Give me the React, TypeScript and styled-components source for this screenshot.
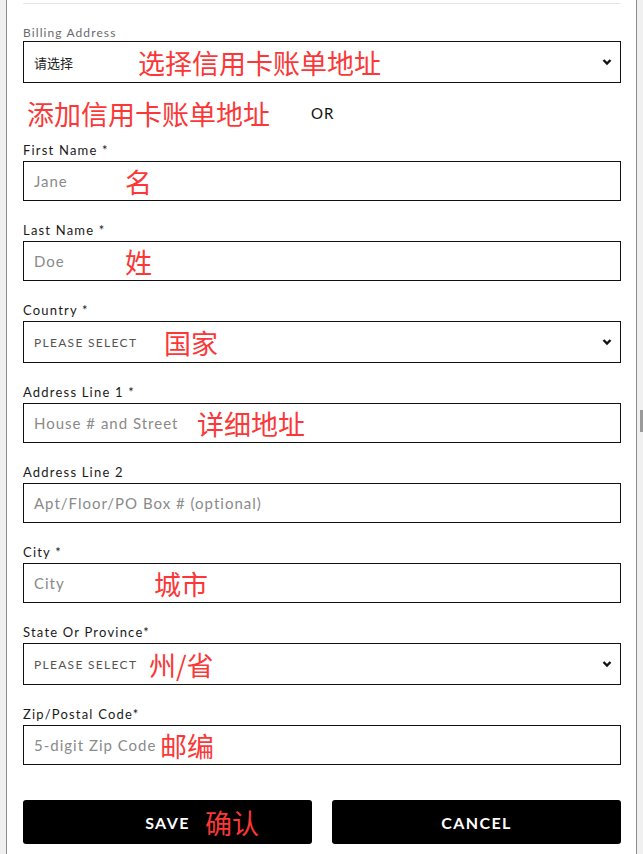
import React from 'react'
import styled, { createGlobalStyle } from 'styled-components'

const GlobalStyle = createGlobalStyle`
  html, body {
    margin: 0;
    padding: 0;
    background: #f0f0f0;
  }
  body {
    font-family: Lato, "Noto Sans", "Noto Sans CJK SC", sans-serif;
  }
`

type FieldType = {
    label: string
    placeholder: string
    note?: string
    noteX?: number
    select?: boolean
    first?: boolean
}

const fields: FieldType[] = [
    { label: 'First Name *', placeholder: 'Jane', note: '名', noteX: 101, first: true },
    { label: 'Last Name *', placeholder: 'Doe', note: '姓', noteX: 101 },
    { label: 'Country *', placeholder: 'PLEASE SELECT', note: '国家', noteX: 140, select: true },
    { label: 'Address Line 1 *', placeholder: 'House # and Street', note: '详细地址', noteX: 173 },
    { label: 'Address Line 2', placeholder: 'Apt/Floor/PO Box # (optional)' },
    { label: 'City *', placeholder: 'City', note: '城市', noteX: 130 },
    { label: 'State Or Province*', placeholder: 'PLEASE SELECT', note: '州/省', noteX: 125, select: true },
    { label: 'Zip/Postal Code*', placeholder: '5-digit Zip Code', note: '邮编', noteX: 136 },
]

function Chevron() {
    return (
        <ChevronIcon width="10" height="8" viewBox="0 0 10 8">
            <path d="M1.5 2 L5 5.5 L8.5 2" fill="none" stroke="#111" strokeWidth="2.4" />
        </ChevronIcon>
    )
}

function Field(props: FieldType) {
    return (
        <FieldStyle $first={props.first}>
            <Label>{props.label}</Label>
            <Box $select={props.select}>
                <Placeholder $select={props.select}>{props.placeholder}</Placeholder>
                {props.note && <Note style={{ left: props.noteX }}>{props.note}</Note>}
                {props.select && <Chevron />}
            </Box>
        </FieldStyle>
    )
}

export default function App() {
    return (
        <>
            <GlobalStyle />
            <Panel>
                <TopLine />
                <BillingLabel>Billing Address</BillingLabel>
                <Box $select>
                    <Chosen>请选择</Chosen>
                    <Note style={{ left: 114 }}>选择信用卡账单地址</Note>
                    <Chevron />
                </Box>
                <OrRow>
                    <AddNote>添加信用卡账单地址</AddNote>
                    <Or>OR</Or>
                </OrRow>
                {fields.map(f => <Field key={f.label} {...f} />)}
                <Buttons>
                    <Button>
                        SAVE
                        <Note style={{ left: 182 }}>确认</Note>
                    </Button>
                    <Button>CANCEL</Button>
                </Buttons>
            </Panel>
            <Thumb />
        </>
    )
}

const Panel = styled.div`
  margin-left: 6px;
  width: 631px;
  min-height: 854px;
  box-sizing: border-box;
  background: #fff;
  border-left: 1px solid #8c8c8c;
  border-right: 1px solid #8c8c8c;
  padding: 3px 15px 0 16px;
`
const TopLine = styled.div`
  height: 1px;
  background: #e6e6e6;
`
const BillingLabel = styled.div`
  margin-top: 21px;
  height: 16px;
  line-height: 16px;
  font-size: 12px;
  color: #6a6a6a;
  letter-spacing: 1.1px;
`
const Box = styled.div<{ $select?: boolean }>`
  position: relative;
  height: ${p => (p.$select ? 42 : 40)}px;
  box-sizing: border-box;
  border: 1.5px solid #111;
  display: flex;
  align-items: center;
  padding: 0 10px;
`
const Chosen = styled.span`
  font-size: 13px;
  color: #222;
  font-family: "Noto Sans CJK SC", sans-serif;
`
const Placeholder = styled.span<{ $select?: boolean }>`
  font-size: ${p => (p.$select ? 12 : 15)}px;
  color: ${p => (p.$select ? '#555' : '#8a8a8a')};
  letter-spacing: ${p => (p.$select ? 1.3 : 1)}px;
  white-space: nowrap;
`
const Note = styled.span`
  position: absolute;
  top: 50%;
  transform: translateY(-50%);
  font-family: "Noto Sans CJK SC", sans-serif;
  font-size: 27px;
  line-height: 1;
  color: #fb3737;
  white-space: nowrap;
  letter-spacing: 0;
  font-weight: 400;
`
const ChevronIcon = styled.svg`
  margin-left: auto;
  margin-right: -2px;
`
const OrRow = styled.div`
  margin-top: 12px;
  height: 36px;
  display: flex;
  align-items: center;
`
const AddNote = styled.span`
  margin-left: 4px;
  font-family: "Noto Sans CJK SC", sans-serif;
  font-size: 27px;
  line-height: 1;
  color: #fb3737;
`
const Or = styled.span`
  margin-left: 41px;
  font-size: 15px;
  color: #111;
  letter-spacing: 1px;
`
const FieldStyle = styled.div<{ $first?: boolean }>`
  margin-top: ${p => (p.$first ? 11 : 21)}px;
`
const Label = styled.div`
  height: 16px;
  line-height: 16px;
  margin-bottom: 3px;
  font-size: 13px;
  color: #1a1a1a;
  letter-spacing: 1.2px;
`
const Buttons = styled.div`
  margin-top: 35px;
  display: grid;
  grid-template-columns: 1fr 1fr;
  gap: 20px;
`
const Button = styled.button`
  position: relative;
  height: 44px;
  border: none;
  border-radius: 3px;
  background: #000;
  color: #fff;
  font-family: Lato, sans-serif;
  font-weight: 700;
  font-size: 16px;
  letter-spacing: 1.4px;
  cursor: pointer;
`
const Thumb = styled.div`
  position: absolute;
  left: 640px;
  top: 410px;
  width: 3px;
  height: 22px;
  background: #9a9a9a;
`
